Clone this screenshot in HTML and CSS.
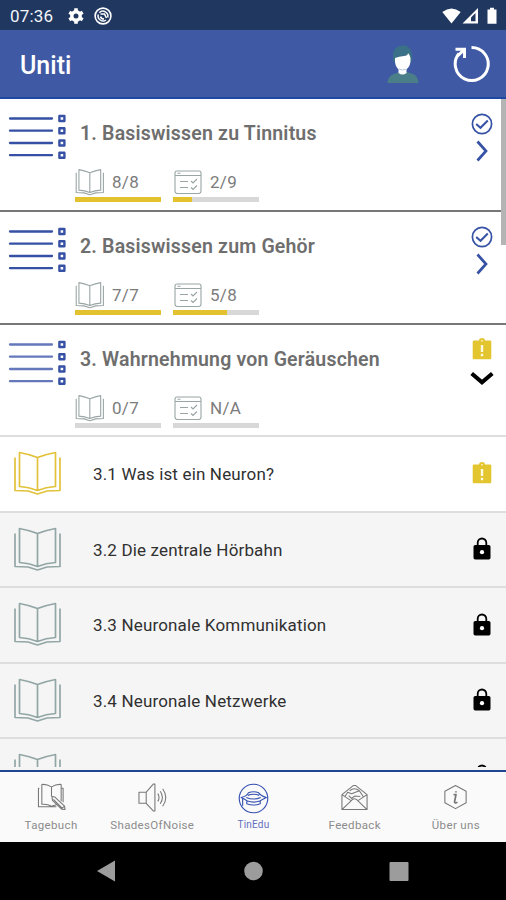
FILE: index.html
```html
<!DOCTYPE html>
<html lang="de">
<head>
  <meta charset="UTF-8" />
  <meta name="viewport" content="width=device-width, initial-scale=1.0"/>
  <title>Uniti</title>
  <link rel="stylesheet" href="styles.css">
</head>
<body>
  <!-- Icons -->
  <svg class="sprite">
    <symbol id="i-list" viewBox="0 0 60 48">
      <path d="M2 6.5h42M2 18.7h42M2 31h42M2 43.2h42" fill="none" stroke-width="2.3" stroke-linecap="round"/>
      <path d="M51.4 4h5v5h-5zM51.4 16.2h5v5h-5zM51.4 28.5h5v5h-5zM51.4 40.7h5v5h-5z" fill="#fff" stroke="#3550a4" stroke-width="2.4" stroke-linejoin="round"/>
    </symbol>
    <symbol id="i-book" viewBox="0 0 48 44">
      <path d="M24.500 6.500Q15 3 6.500 1.500V35.500Q16 36 24.500 39.500Q33 36 42.500 35.500V1.500Q34 3 24.500 6.500ZM24.500 6.500V39M2 6.500V39.500L15 40 24.500 43 34 40 47 39.500V6.500" fill="none" stroke="currentColor" stroke-linejoin="round"/>
    </symbol>
    <symbol id="i-quiz" viewBox="0 0 28 25">
      <path d="M3 1h22q2 0 2 2v18q0 2.500-2.500 2.500h-21q-2.500 0-2.500-2.500v-18q0-2 2-2zM1 5.500h26M6 11.500h8M6 17.500h8M17 11l2 2 4-4M17 17.500l2 2 4-4M3.500 3.200h3" fill="none" stroke="currentColor" stroke-width="1.100"/>
    </symbol>
    <symbol id="i-check" viewBox="0 0 22 22">
      <circle cx="11" cy="11" r="9.600" fill="none" stroke="currentColor" stroke-width="1.700"/>
      <path d="M5.200 11l4.300 3.800 7.300-7.300" fill="none" stroke="currentColor" stroke-width="2"/>
    </symbol>
    <symbol id="i-right" viewBox="0 0 12 22">
      <path d="M1.500 1.500L10 11 1.500 20.500" fill="none" stroke="currentColor" stroke-width="2.700"/>
    </symbol>
    <symbol id="i-down" viewBox="0 0 24 16">
      <path d="M1.700 2.500L12 11.300 22.300 2.500" fill="none" stroke="#000" stroke-width="4"/>
    </symbol>
    <symbol id="i-todo" viewBox="0 0 20 22">
      <path d="M2 2.500h5a3 2.500 0 0 1 6 0h5q1.300 0 1.300 1.300v16q0 1.500-1.300 1.500h-16q-1.300 0-1.300-1.500v-16q0-1.300 1.300-1.300z" fill="#e2c52f"/>
      <path d="M10 7v7M10 15.700v2.600" stroke="#fffbe0" stroke-width="2.400"/>
      <circle cx="10" cy="2.800" r=".8" fill="#fff"/>
    </symbol>
    <symbol id="i-lock" viewBox="0 0 18 23">
      <path d="M4.700 9V5.800a4.300 4.300 0 0 1 8.600 0V9" fill="none" stroke="#000" stroke-width="1.800"/>
      <rect x=".5" y="8" width="17" height="14.500" rx="1.700"/>
      <circle cx="9" cy="15.200" r="2.100" fill="#fff"/>
    </symbol>
  </svg>

  <div class="phone">
    <div class="status">
      <span class="clock">07:36</span>
      <svg class="gear" width="16" height="16" viewBox="0 0 16 16">
        <circle cx="8" cy="8" r="4.200" fill="none" stroke="#fff" stroke-width="3.400"/>
        <path d="M8 .3v3M8 12.700v3M1.300 4.200l2.600 1.500M12.100 10.300l2.600 1.500M1.300 11.800l2.600-1.500M12.100 5.700l2.600-1.500" stroke="#fff" stroke-width="3.600"/>
      </svg>
      <svg class="sync" width="18" height="18" viewBox="0 0 18 18" fill="none" stroke="#fff">
        <circle cx="9" cy="9" r="7.900" stroke-width="1.600"/>
        <path d="M5.300 5.700A5 5 0 0 1 13.700 10.500M12 13A5 5 0 0 1 4.300 7.500" stroke-width="1.500"/>
        <path d="M6.500 7H10.500L12.500 11M6.500 9.500Q7 12 10 12" stroke-width="1.600"/>
      </svg>
      <svg class="signals" width="56" height="18" viewBox="0 0 56 18" fill="#fff">
        <path d="M.3 5Q9.500-2 18.700 5L9.500 16.500z"/>
        <path d="M20.500 16.500L36 1v15.500z"/>
        <path d="M29 14.300V10.500l4.500-4.500v8.300z" fill="#20375f"/>
        <path d="M45.500 2.500h2.500V.8h4v1.700h2.500v14.200h-9z"/>
      </svg>
    </div>

    <header class="appbar">
      <h1>Uniti</h1>
      <svg class="avatar" width="34" height="40" viewBox="0 0 34 40">
        <path d="M7 17V10Q8 3 14 2Q17 .5 21 2Q27 5 26 17L23 20H10z" fill="#3b7188"/>
        <path d="M1.500 39Q2 32 8 30L13 28H21L27 30Q32 32 32.500 39z" fill="#4a7e88"/>
        <path d="M9 14Q13 12.500 18 12Q22 11.500 22 9Q24 11 24.500 14Q25 22 20.500 25.500V29Q16.500 32 12.500 29V25.500Q8.500 22 9 14z" fill="#fff"/>
        <path d="M13 25Q16.500 27 20 25" fill="none" stroke="#b9cbe0"/>
      </svg>
      <svg class="reload" width="40" height="40" viewBox="0 0 40 40" fill="none" stroke="#fff" stroke-width="3">
        <path d="M19.500 3.500A16.500 16.500 0 1 1 7 9.500"/>
        <path d="M3.500 5.300H12.500V14M12 5.800L5 12.500"/>
      </svg>
    </header>

    <main class="content">
      <section class="chapter">
        <svg class="list-icon"><use href="#i-list"/></svg>
        <div class="info">
          <h2>1. Basiswissen zu Tinnitus</h2>
          <div class="stats">
            <div class="stat"><svg class="small-book"><use href="#i-book"/></svg><span>8/8</span><div class="bar"><i style="width: 100%"></i></div></div>
            <div class="stat"><svg class="quiz"><use href="#i-quiz"/></svg><span>2/9</span><div class="bar"><i style="width: 22.2%"></i></div></div>
          </div>
        </div>
        <div class="state"><svg class="check"><use href="#i-check"/></svg><svg class="right"><use href="#i-right"/></svg></div>
      </section>

      <section class="chapter">
        <svg class="list-icon"><use href="#i-list"/></svg>
        <div class="info">
          <h2>2. Basiswissen zum Gehör</h2>
          <div class="stats">
            <div class="stat"><svg class="small-book"><use href="#i-book"/></svg><span>7/7</span><div class="bar"><i style="width: 100%"></i></div></div>
            <div class="stat"><svg class="quiz"><use href="#i-quiz"/></svg><span>5/8</span><div class="bar"><i style="width: 62.5%"></i></div></div>
          </div>
        </div>
        <div class="state"><svg class="check"><use href="#i-check"/></svg><svg class="right"><use href="#i-right"/></svg></div>
      </section>

      <section class="chapter open">
        <svg class="list-icon"><use href="#i-list"/></svg>
        <div class="info">
          <h2>3. Wahrnehmung von Geräuschen</h2>
          <div class="stats">
            <div class="stat"><svg class="small-book"><use href="#i-book"/></svg><span>0/7</span><div class="bar"></div></div>
            <div class="stat"><svg class="quiz"><use href="#i-quiz"/></svg><span>N/A</span><div class="bar"></div></div>
          </div>
        </div>
        <div class="state"><svg class="todo"><use href="#i-todo"/></svg><svg class="down"><use href="#i-down"/></svg></div>
      </section>

      <div class="lesson active"><svg class="book"><use href="#i-book"/></svg><span>3.1 Was ist ein Neuron?</span><svg class="todo"><use href="#i-todo"/></svg></div>
      <div class="lesson"><svg class="book"><use href="#i-book"/></svg><span>3.2 Die zentrale Hörbahn</span><svg class="lock"><use href="#i-lock"/></svg></div>
      <div class="lesson"><svg class="book"><use href="#i-book"/></svg><span>3.3 Neuronale Kommunikation</span><svg class="lock"><use href="#i-lock"/></svg></div>
      <div class="lesson"><svg class="book"><use href="#i-book"/></svg><span>3.4 Neuronale Netzwerke</span><svg class="lock"><use href="#i-lock"/></svg></div>
      <div class="lesson"><svg class="book"><use href="#i-book"/></svg><span></span><svg class="lock"><use href="#i-lock"/></svg></div>
      <div class="scrollbar"></div>
    </main>

    <nav class="tabs">
      <a class="tab">
        <svg viewBox="0 0 30 30"><path d="M15 4Q10 1 5 1.500V22Q11 21.500 15 24L20 22.500M15 4Q20 1 25 1.500V19M15 4V14M2.500 5.500H1.500V24.500H20M25 5.500H27V20M15.500 14L18.500 14.500 28.500 24 29 27.500 25.500 27 16 18zM17 17L26 26M26 26L28.500 24"/></svg>
        <span>Tagebuch</span>
      </a>
      <a class="tab">
        <svg viewBox="0 0 30 30"><path d="M1 9.500H8.500V21H1zM8.500 9.500L16 1H17.500V29H16L8.500 21M20.500 11Q23 15 20.500 19M23 8.500Q27.500 15 23 21.500M25.500 6Q32 15 25.500 24"/></svg>
        <span>ShadesOfNoise</span>
      </a>
      <a class="tab selected">
        <svg viewBox="0 0 30 30"><circle cx="15" cy="15" r="13.800"/><path d="M3 14Q9 12.500 10 9.500Q15 7.500 20 9.500Q22 12.500 27.500 14Q23 16 21 17.500Q15 19.500 9 17.500Q7 15.500 3 14zM9.500 12Q15 9.800 20.500 12M8 14Q15 17 22 14M8.500 18V20Q15 22.500 21.500 20V17.500M4.500 15V22"/></svg>
        <span>TinEdu</span>
      </a>
      <a class="tab">
        <svg viewBox="0 0 30 30"><path d="M2 12L14 2.500H16L28 12V27.500H2zM2 12L11 18M28 12L19 18M2 27.500L13 17Q15 15.500 17 17L28 27.500M5 14L8 9.500 12 11 20 8 24 14M10 8Q15 4 20 8M9 13L12 16 15 13.500 21 14"/></svg>
        <span>Feedback</span>
      </a>
      <a class="tab">
        <svg viewBox="0 0 30 30"><path d="M15 2.500L26 8.500V20.500L15 26.500 4 20.500V8.500z"/><path d="M13 12H15.500L14 19.500Q14 21.500 17 20M15.500 8.500V9.700" stroke-width="1.800"/></svg>
        <span>Über uns</span>
      </a>
    </nav>

    <div class="softkeys">
      <svg width="506" height="58" viewBox="0 0 506 58" fill="#9c9c9c">
        <path d="M97 29L115 18.500V39.500z"/>
        <circle cx="253.500" cy="29" r="9.300"/>
        <rect x="389.500" y="20" width="19" height="19" rx="1"/>
      </svg>
    </div>
  </div>
</body>
</html>
```
FILE: styles.css
```css
* {
  box-sizing: border-box;
}

body {
  margin: 0;
  font-family: Roboto, sans-serif;
  background-color: #fff;
}

svg {
  display: block;
  flex: none;
}

.sprite {
  display: none;
}

.phone {
  width: 506px;
  height: 900px;
  display: flex;
  flex-direction: column;
  overflow: hidden;
}

.status {
  height: 30px;
  flex: none;
  display: flex;
  align-items: center;
  padding: 1px 8px 0 10px;
  background-color: #20375f;
  color: #f2f5fa;
}

.clock {
  width: 58px;
  font-size: 17px;
  letter-spacing: 0.2px;
}

.sync {
  margin-left: 10px;
}

.signals {
  margin-left: auto;
}

.appbar {
  height: 69px;
  flex: none;
  display: flex;
  align-items: center;
  padding: 0 14px 0 20px;
  background-color: #3f59a4;
  border-bottom: 2px solid #2148a0;
  color: #fff;
}

.appbar h1 {
  flex: 1;
  margin: 4px 0 0;
  font-size: 25px;
  font-weight: 500;
}

.avatar {
  margin-right: 32px;
}

.content {
  position: relative;
  height: 668px;
  flex: none;
  overflow: hidden;
}

.chapter {
  height: 113px;
  display: flex;
  border-bottom: 2px solid #777;
}

.chapter.open {
  height: 110px;
  border-bottom: 0;
}

.list-icon {
  width: 60px;
  height: 48px;
  margin: 13px 0 0 8px;
  stroke: #3550a4;
}

.open .list-icon {
  stroke: #6478bb;
}

.info {
  flex: 1;
  padding: 22px 0 0 7px;
}

.info h2 {
  margin: 0 0 0 5px;
  font-size: 19.5px;
  line-height: 26px;
  font-weight: 600;
  letter-spacing: 0.19px;
  color: #6e6e6e;
  white-space: nowrap;
}

.stats {
  display: flex;
  gap: 12px;
  margin-top: 20px;
}

.stat {
  width: 86px;
  display: flex;
  flex-wrap: wrap;
  align-items: center;
  color: #9aa5a5;
}

.stat span {
  margin-left: 8px;
  padding-top: 1px;
  font-size: 17px;
  line-height: 29px;
  letter-spacing: 0.3px;
  color: #7c7c7c;
}

.small-book {
  width: 29px;
  height: 28px;
  stroke-width: 1.8;
}

.quiz {
  width: 28px;
  height: 25px;
  margin: 0 0 0 1px;
}

.bar {
  width: 100%;
  height: 5px;
  background-color: #d8d8d8;
}

.bar i {
  display: block;
  height: 100%;
  background-color: #e4c22f;
}

.state {
  width: 48px;
  padding-top: 14px;
  display: flex;
  flex-direction: column;
  align-items: center;
  color: #3652a5;
}

.check {
  width: 22px;
  height: 22px;
}

.right {
  width: 12px;
  height: 22px;
  margin-top: 5px;
}

.todo {
  width: 20px;
  height: 22px;
}

.down {
  width: 24px;
  height: 16px;
  margin-top: 11px;
}

.open .state {
  padding-top: 13px;
}

.lesson {
  height: 75.5px;
  display: flex;
  align-items: center;
  padding: 0 15px 1px 13px;
  background-color: #f5f5f5;
  border-top: 2px solid #dedede;
  color: #93a6a6;
}

.lesson.active {
  background-color: #fff;
  color: #e2c23a;
}

.lesson span {
  flex: 1;
  margin: 2px 0 0 32px;
  font-size: 17px;
  letter-spacing: 0.16px;
  color: #303030;
}

.lesson .todo {
  margin-right: -1px;
}

.book {
  width: 48px;
  height: 44px;
  stroke-width: 1.7;
}

.lock {
  width: 18px;
  height: 23px;
}

.scrollbar {
  position: absolute;
  top: 0;
  right: 0;
  width: 5px;
  height: 146px;
  background-color: #b4b4b4;
}

.tabs {
  height: 75px;
  flex: none;
  display: flex;
  padding-top: 13px;
  background: linear-gradient(#f5f5f5 3px, #1f4690 3px, #1f4690 5px, #fafafa 5px);
}

.tab {
  flex: 1;
  display: flex;
  flex-direction: column;
  align-items: center;
  padding-left: 1px;
  color: #777;
}

.tab svg {
  width: 29px;
  height: 29px;
  margin-top: 3px;
  fill: none;
  stroke: currentColor;
  stroke-width: 1.1;
  stroke-linejoin: round;
}

.tab span {
  margin-top: 6px;
  font-size: 11.5px;
  line-height: 14px;
  letter-spacing: 0.35px;
  color: #8c8c8c;
}

.tab.selected {
  color: #3550b0;
}

.tab.selected svg {
  width: 31px;
  height: 31px;
}

.tab.selected span {
  margin-top: 4px;
  font-size: 10px;
  letter-spacing: 0.2px;
  color: #6270c0;
}

.softkeys {
  height: 58px;
  background-color: #000;
}
```
